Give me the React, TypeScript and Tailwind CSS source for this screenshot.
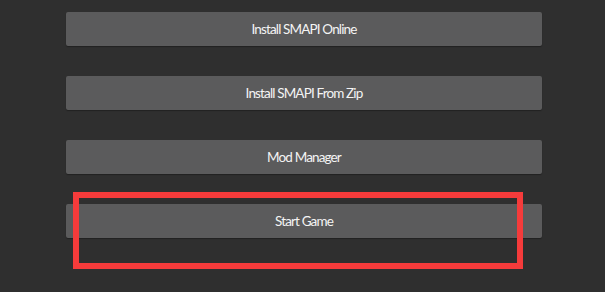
const buttons = ['Install SMAPI Online', 'Install SMAPI From Zip', 'Mod Manager', 'Start Game'];

export default function App() {
  return (
    <div className="relative h-[292px] w-[605px] overflow-hidden bg-[#2f2f2f] font-['Lato',sans-serif]">
      <div className="flex flex-col gap-[30px] pl-[66px] pr-[63px] pt-[12px]">
        {buttons.map((label) => (
          <button
            key={label}
            className="flex h-[34px] items-center justify-center rounded-[2px] bg-[#5b5b5c] text-[13.5px] tracking-[-0.85px] text-[#f4f4f4] shadow-[0_1px_1px_rgba(0,0,0,0.3)]"
          >
            {label}
          </button>
        ))}
      </div>

      {/* highlight box */}
      <div className="absolute left-[73px] top-[192px] h-[77px] w-[450px] border-[6px] border-[#f53b3b]" />
    </div>
  );
}
